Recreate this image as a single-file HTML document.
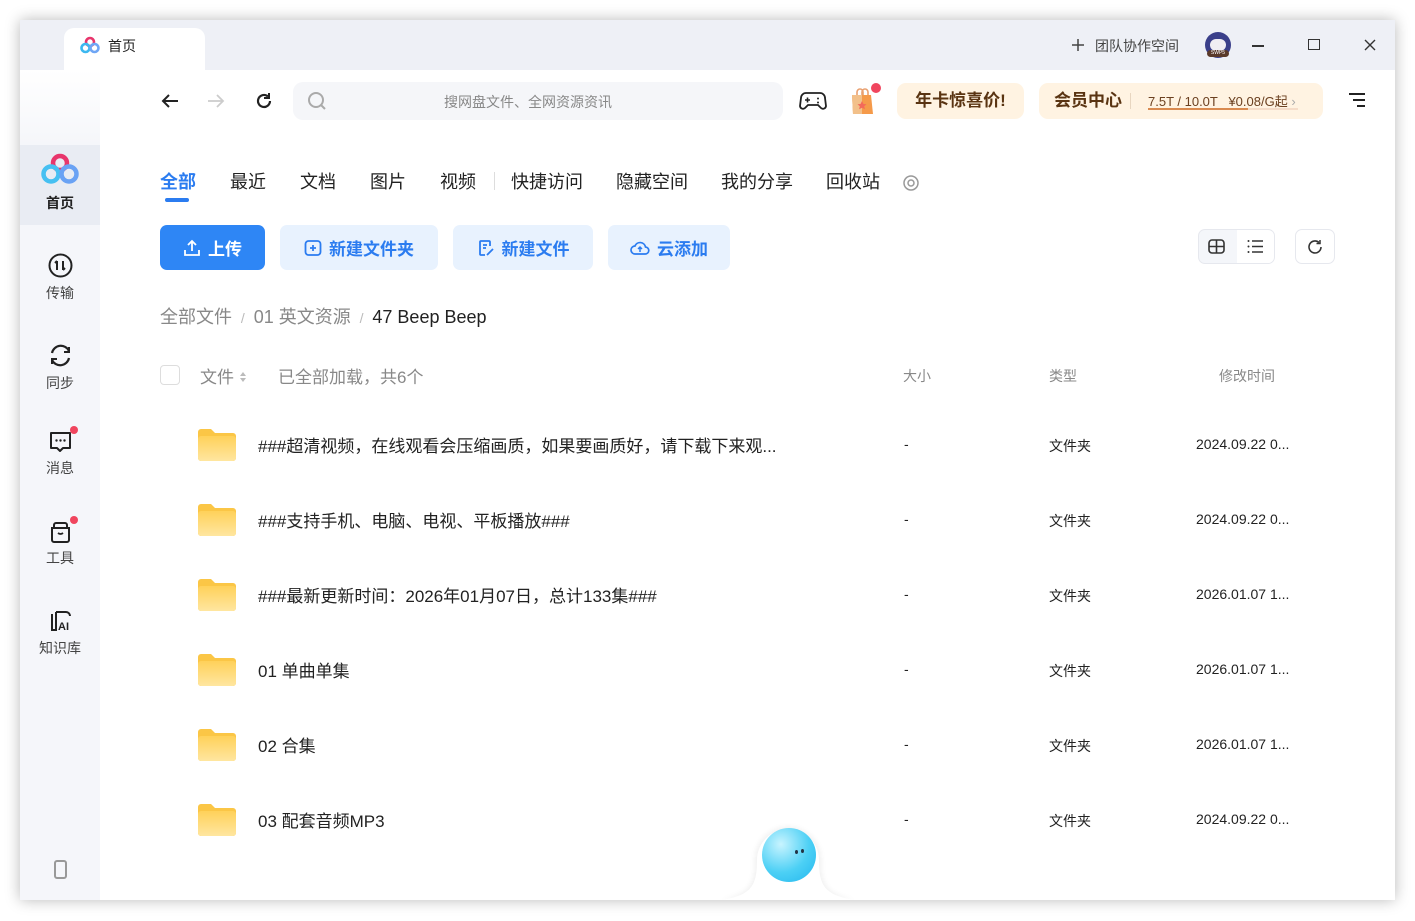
<!DOCTYPE html>
<html><head><meta charset="utf-8">
<style>
*{margin:0;padding:0;box-sizing:border-box}
body{width:1415px;height:921px;background:#fff;position:relative;overflow:hidden;font-family:"Liberation Sans","Noto Sans CJK SC",sans-serif;color:#222}
.a{position:absolute;white-space:nowrap}
#win{position:absolute;left:20px;top:20px;width:1375px;height:880px;background:#fff;box-shadow:0 0 14px rgba(0,0,0,.28);overflow:hidden}
#title{position:absolute;left:0;top:0;width:1375px;height:50px;background:#eef0f6}
#tab{position:absolute;left:44px;top:8px;width:141px;height:46px;background:#fff;border-radius:10px 10px 0 0}
#side{position:absolute;left:0;top:50px;width:80px;height:830px;background:#f5f6fa}
.si{position:absolute;left:0;width:80px;text-align:center;font-size:14px;color:#444}
.btn{position:absolute;top:205px;height:45px;border-radius:7px;background:#e8f2fe;color:#2b7cf0;font-weight:bold;font-size:17px;display:flex;align-items:center;justify-content:center;gap:7px}
.nav{position:absolute;top:148px;font-size:18px;color:#222}
.row{position:absolute;left:178px;width:1140px;height:40px}
.fold{position:absolute;left:0;top:3px;width:38px;height:32px}
.rn{position:absolute;left:60px;top:6px;font-size:17px;color:#222}
.rs{position:absolute;left:706px;top:10px;font-size:14px}
.rt{position:absolute;left:851px;top:10px;font-size:14px}
.rd{position:absolute;left:998px;top:10px;font-size:14px}
</style></head><body>
<div id="win">
<div id="title"></div>
<div id="tab"></div>
<svg class="a" style="left:60px;top:16px" width="20" height="18" viewBox="0 0 20 18"><circle cx="10" cy="6" r="4" fill="none" stroke="#e8356c" stroke-width="2.6"/><circle cx="5.5" cy="12" r="4" fill="none" stroke="#3cb8f0" stroke-width="2.6"/><circle cx="14.5" cy="12" r="4" fill="none" stroke="#6fa6f5" stroke-width="2.6"/></svg>
<div class="a" style="left:88px;top:16px;font-size:14px">首页</div>
<svg class="a" style="left:1051px;top:18px" width="14" height="14" viewBox="0 0 14 14"><path d="M7 1v12M1 7h12" stroke="#444" stroke-width="1.5"/></svg>
<div class="a" style="left:1075px;top:16px;font-size:14px;color:#444">团队协作空间</div>
<div class="a" style="left:1185px;top:12px;width:26px;height:26px;border-radius:50%;background:#3a3f8a"><div style="position:absolute;left:5px;top:7px;width:16px;height:12px;background:#f0eef3;border-radius:6px"></div><div style="position:absolute;left:2px;top:18px;width:22px;height:7px;background:#5a3a2a;border-radius:4px;font-size:5px;color:#fff;text-align:center;line-height:7px">SWP5</div></div>
<div class="a" style="left:1232px;top:25px;width:12px;height:1.5px;background:#333"></div>
<div class="a" style="left:1288px;top:19px;width:12px;height:11px;border:1.5px solid #333"></div>
<svg class="a" style="left:1344px;top:19px" width="12" height="12" viewBox="0 0 12 12"><path d="M1 1l10 10M11 1L1 11" stroke="#333" stroke-width="1.4"/></svg>

<div id="side">
 <div class="a" style="left:0;top:0;width:80px;height:75px;background:linear-gradient(#fff,#f5f6fa)"></div>
 <div class="a" style="left:0;top:75px;width:80px;height:80px;background:#e9ecf3"></div>
 <svg class="a" style="left:20px;top:82px" width="40" height="34" viewBox="0 0 40 34"><circle cx="20" cy="11" r="7" fill="none" stroke="#e8356c" stroke-width="4.5"/><circle cx="11" cy="22" r="7.5" fill="none" stroke="#46c0f2" stroke-width="4.5"/><circle cx="29" cy="22" r="7.5" fill="none" stroke="#6aa2f4" stroke-width="4.5"/></svg>
 <div class="si" style="top:123px;font-weight:bold;color:#222">首页</div>
 <svg class="a" style="left:28px;top:183px" width="25" height="25" viewBox="0 0 25 25"><circle cx="12.5" cy="12.5" r="11" fill="none" stroke="#222" stroke-width="2"/><path d="M9 8v9M9 8l-2 2M15 8v9M15 17l2-2" stroke="#222" stroke-width="2" fill="none"/></svg>
 <div class="si" style="top:213px">传输</div>
 <svg class="a" style="left:28px;top:273px" width="25" height="25" viewBox="0 0 25 25"><path d="M4 10a9 9 0 0 1 17-2M21 15a9 9 0 0 1-17 2" stroke="#222" stroke-width="2.2" fill="none"/><path d="M21 4v5h-5M4 21v-5h5" stroke="#222" stroke-width="2" fill="none"/></svg>
 <div class="si" style="top:303px">同步</div>
 <svg class="a" style="left:28px;top:360px" width="25" height="25" viewBox="0 0 25 25"><path d="M3 3h19v15h-7l-3 3-3-3H3z" stroke="#222" stroke-width="2" fill="none" stroke-linejoin="round"/><circle cx="8.5" cy="10.5" r="1.2" fill="#222"/><circle cx="12.5" cy="10.5" r="1.2" fill="#222"/><circle cx="16.5" cy="10.5" r="1.2" fill="#222"/></svg>
 <div class="a" style="left:50px;top:356px;width:8px;height:8px;border-radius:50%;background:#f0455e"></div>
 <div class="si" style="top:388px">消息</div>
 <svg class="a" style="left:28px;top:450px" width="25" height="25" viewBox="0 0 25 25"><path d="M6 7V5a2 2 0 0 1 2-2h9a2 2 0 0 1 2 2v2M4 8h17v12a2 2 0 0 1-2 2H6a2 2 0 0 1-2-2z" stroke="#222" stroke-width="2" fill="none"/><path d="M10 13q2.5 2 5 0" stroke="#222" stroke-width="1.8" fill="none"/></svg>
 <div class="a" style="left:50px;top:446px;width:8px;height:8px;border-radius:50%;background:#f0455e"></div>
 <div class="si" style="top:478px">工具</div>
 <svg class="a" style="left:29px;top:539px" width="25" height="25" viewBox="0 0 25 25"><path d="M3 5v16h4V3" stroke="#222" stroke-width="2" fill="none"/><path d="M7 3h10a4 4 0 0 1 4 4" stroke="#222" stroke-width="2" fill="none"/><text x="9" y="21" font-size="11" font-weight="bold" font-family="Liberation Sans" fill="#222">AI</text></svg>
 <div class="si" style="top:568px">知识库</div>
 <div class="a" style="left:34px;top:790px;width:13px;height:19px;border:2px solid #999;border-radius:3px"></div>
</div>

<svg class="a" style="left:140px;top:72px" width="20" height="18" viewBox="0 0 20 18"><path d="M18 9H3M9 3L3 9l6 6" stroke="#222" stroke-width="2" fill="none"/></svg>
<svg class="a" style="left:186px;top:72px" width="20" height="18" viewBox="0 0 20 18"><path d="M2 9h15M11 3l6 6-6 6" stroke="#ccc" stroke-width="1.8" fill="none"/></svg>
<svg class="a" style="left:234px;top:71px" width="20" height="20" viewBox="0 0 20 20"><path d="M16 10a6 6 0 1 1-2-4.5" stroke="#222" stroke-width="2.2" fill="none"/><path d="M15 2v5h-5" stroke="#222" stroke-width="2" fill="none"/></svg>
<div class="a" style="left:273px;top:62px;width:490px;height:38px;background:#f5f6f9;border-radius:10px"></div>
<svg class="a" style="left:287px;top:71px" width="20" height="20" viewBox="0 0 20 20"><circle cx="9" cy="9" r="7" stroke="#aaa" stroke-width="2" fill="none"/><path d="M14 14l4 4" stroke="#aaa" stroke-width="2"/></svg>
<div class="a" style="left:424px;top:72px;font-size:14px;color:#888">搜网盘文件、全网资源资讯</div>
<svg class="a" style="left:779px;top:70px" width="28" height="22" viewBox="0 0 28 22"><path d="M7 3h14a5 5 0 0 1 5 5l1 8a3 3 0 0 1-5 2l-3-3H9l-3 3a3 3 0 0 1-5-2l1-8a5 5 0 0 1 5-5z" stroke="#222" stroke-width="1.8" fill="none"/><path d="M6 10h5M8.5 7.5v5" stroke="#222" stroke-width="1.6"/><circle cx="19" cy="8.5" r="1" fill="#222"/><circle cx="19" cy="12.5" r="1" fill="#222"/></svg>
<svg class="a" style="left:829px;top:66px" width="26" height="30" viewBox="0 0 26 30"><path d="M8 9V6a3 3 0 0 1 6 0v3M13 9V6a3 3 0 0 1 6 0v3" stroke="#e9a070" stroke-width="1.6" fill="none"/><path d="M3 9h19l2 19H4z" fill="#f59a4a"/><path d="M3 9h10v19H4z" fill="#f2c08a"/><path d="M13 15l1.5 3 3 .3-2.3 2 .7 3-2.9-1.6-2.9 1.6.7-3-2.3-2 3-.3z" fill="#f36a5a"/></svg>
<div class="a" style="left:851px;top:63px;width:10px;height:10px;border-radius:50%;background:#f0455e"></div>
<div class="a" style="left:877px;top:63px;width:127px;height:36px;background:#fff3e2;border-radius:9px;font-size:17px;font-weight:bold;color:#5a3412;text-align:center;line-height:36px">年卡惊喜价!</div>
<div class="a" style="left:1019px;top:63px;width:284px;height:36px;background:#fff3e2;border-radius:9px"></div>
<div class="a" style="left:1034px;top:70px;font-size:17px;font-weight:bold;color:#5a3412;line-height:22px">会员中心</div>
<div class="a" style="left:1110px;top:73px;width:1px;height:16px;background:#e8d6c0"></div>
<div class="a" style="left:1128px;top:71px;font-size:13px;color:#6b4020">7.5T / 10.0T &nbsp; ¥0.08/G起 <span style="color:#aaa">›</span></div>
<div class="a" style="left:1128px;top:88px;width:150px;height:2px;background:#f5dcc8"></div>
<div class="a" style="left:1128px;top:88px;width:100px;height:2px;background:#d98a50"></div>
<svg class="a" style="left:1328px;top:72px" width="18" height="16" viewBox="0 0 18 16"><path d="M1 2h16M5 8h12M9 14h8" stroke="#222" stroke-width="2"/></svg>

<div class="nav" style="left:140px;color:#2b7cf0;font-weight:bold">全部</div>
<div class="a" style="left:145px;top:178px;width:24px;height:4px;border-radius:2px;background:#2b7cf0"></div>
<div class="nav" style="left:210px">最近</div>
<div class="nav" style="left:280px">文档</div>
<div class="nav" style="left:350px">图片</div>
<div class="nav" style="left:420px">视频</div>
<div class="a" style="left:474px;top:152px;width:1px;height:18px;background:#ddd"></div>
<div class="nav" style="left:491px">快捷访问</div>
<div class="nav" style="left:596px">隐藏空间</div>
<div class="nav" style="left:701px">我的分享</div>
<div class="nav" style="left:806px">回收站</div>
<svg class="a" style="left:882px;top:154px" width="18" height="18" viewBox="0 0 18 18"><circle cx="9" cy="9" r="7" stroke="#999" stroke-width="1.5" fill="none"/><circle cx="9" cy="9" r="3" stroke="#999" stroke-width="1.5" fill="none"/></svg>

<div class="btn" style="left:140px;width:105px;background:#2e86f5;color:#fff"><svg width="18" height="18" viewBox="0 0 18 18"><path d="M9 12V2M5 6l4-4 4 4M2 11v5h14v-5" stroke="#fff" stroke-width="1.8" fill="none"/></svg>上传</div>
<div class="btn" style="left:260px;width:158px"><svg width="18" height="18" viewBox="0 0 18 18"><rect x="1.5" y="2" width="15" height="14" rx="3" stroke="#2b7cf0" stroke-width="1.8" fill="none"/><path d="M9 6v6M6 9h6" stroke="#2b7cf0" stroke-width="1.8"/></svg>新建文件夹</div>
<div class="btn" style="left:433px;width:140px"><svg width="18" height="18" viewBox="0 0 18 18"><path d="M13 7V3a1 1 0 0 0-1-1H4a1 1 0 0 0-1 1v12a1 1 0 0 0 1 1h4M6 6h4M6 9h3M10 16l6-6" stroke="#2b7cf0" stroke-width="1.8" fill="none"/></svg>新建文件</div>
<div class="btn" style="left:588px;width:122px"><svg width="20" height="18" viewBox="0 0 20 18"><path d="M5 15a4 4 0 0 1 0-8 5.5 5.5 0 0 1 10.5 1A3.5 3.5 0 0 1 15 15z" stroke="#2b7cf0" stroke-width="1.7" fill="none"/><path d="M10 13V8M8 10l2-2 2 2" stroke="#2b7cf0" stroke-width="1.5" fill="none"/></svg>云添加</div>
<div class="a" style="left:1178px;top:209px;width:77px;height:35px;border:1px solid #e6e8ee;border-radius:7px;background:#f4f6fa"></div>
<div class="a" style="left:1217px;top:210px;width:37px;height:33px;background:#fff;border-radius:0 6px 6px 0"></div>
<svg class="a" style="left:1188px;top:219px" width="17" height="15" viewBox="0 0 17 15"><rect x="1" y="1" width="15" height="13" rx="3" stroke="#333" stroke-width="1.6" fill="none"/><path d="M1 7.5h15M8.5 1v13" stroke="#333" stroke-width="1.6"/></svg>
<svg class="a" style="left:1227px;top:219px" width="17" height="15" viewBox="0 0 17 15"><path d="M5 2h11M5 7.5h11M5 13h11" stroke="#333" stroke-width="1.5"/><circle cx="1.5" cy="2" r="1" fill="#333"/><circle cx="1.5" cy="7.5" r="1" fill="#333"/><circle cx="1.5" cy="13" r="1" fill="#333"/></svg>
<div class="a" style="left:1275px;top:209px;width:40px;height:35px;border:1px solid #e6e8ee;border-radius:7px"></div>
<svg class="a" style="left:1286px;top:218px" width="18" height="18" viewBox="0 0 18 18"><path d="M15 9a6 6 0 1 1-2-4.5" stroke="#333" stroke-width="1.6" fill="none"/><path d="M14 2v3.5h-3.5" stroke="#333" stroke-width="1.5" fill="none"/></svg>

<div class="a" style="left:140px;top:283px;font-size:18px;color:#888">全部文件 <span style="color:#bbb;font-size:14px">&nbsp;/&nbsp;</span> 01 英文资源 <span style="color:#bbb;font-size:14px">&nbsp;/&nbsp;</span> <span style="color:#222">47 Beep Beep</span></div>

<div class="a" style="left:140px;top:345px;width:20px;height:20px;border:1.5px solid #ddd;border-radius:4px"></div>
<div class="a" style="left:180px;top:343px;font-size:17px;color:#888">文件 <svg width="8" height="12" viewBox="0 0 8 12"><path d="M4 1l3 4H1zM4 11l3-4H1z" fill="#bbb"/></svg></div>
<div class="a" style="left:258px;top:343px;font-size:17px;color:#888">已全部加载，共6个</div>
<div class="a" style="left:883px;top:346px;font-size:14px;color:#888">大小</div>
<div class="a" style="left:1029px;top:346px;font-size:14px;color:#888">类型</div>
<div class="a" style="left:1199px;top:346px;font-size:14px;color:#888">修改时间</div>

<div class="row" style="top:406px"><svg class="fold" viewBox="0 0 38 32"><defs><linearGradient id="g" x1="0" y1="0" x2="0" y2="1"><stop offset="0" stop-color="#ffd15a"/><stop offset="1" stop-color="#ffe6a0"/></linearGradient></defs><path d="M0 3a3 3 0 0 1 3-3h10l4 4h18a3 3 0 0 1 3 3v22a3 3 0 0 1-3 3H3a3 3 0 0 1-3-3z" fill="#fbc646"/><rect x="0" y="7" width="38" height="25" rx="3" fill="url(#g)"/></svg><div class="rn">###超清视频，在线观看会压缩画质，如果要画质好，请下载下来观...</div><div class="rs">-</div><div class="rt">文件夹</div><div class="rd">2024.09.22 0...</div></div>
<div class="row" style="top:481px"><svg class="fold" viewBox="0 0 38 32"><path d="M0 3a3 3 0 0 1 3-3h10l4 4h18a3 3 0 0 1 3 3v22a3 3 0 0 1-3 3H3a3 3 0 0 1-3-3z" fill="#fbc646"/><rect x="0" y="7" width="38" height="25" rx="3" fill="url(#g)"/></svg><div class="rn">###支持手机、电脑、电视、平板播放###</div><div class="rs">-</div><div class="rt">文件夹</div><div class="rd">2024.09.22 0...</div></div>
<div class="row" style="top:556px"><svg class="fold" viewBox="0 0 38 32"><path d="M0 3a3 3 0 0 1 3-3h10l4 4h18a3 3 0 0 1 3 3v22a3 3 0 0 1-3 3H3a3 3 0 0 1-3-3z" fill="#fbc646"/><rect x="0" y="7" width="38" height="25" rx="3" fill="url(#g)"/></svg><div class="rn">###最新更新时间：2026年01月07日，总计133集###</div><div class="rs">-</div><div class="rt">文件夹</div><div class="rd">2026.01.07 1...</div></div>
<div class="row" style="top:631px"><svg class="fold" viewBox="0 0 38 32"><path d="M0 3a3 3 0 0 1 3-3h10l4 4h18a3 3 0 0 1 3 3v22a3 3 0 0 1-3 3H3a3 3 0 0 1-3-3z" fill="#fbc646"/><rect x="0" y="7" width="38" height="25" rx="3" fill="url(#g)"/></svg><div class="rn">01 单曲单集</div><div class="rs">-</div><div class="rt">文件夹</div><div class="rd">2026.01.07 1...</div></div>
<div class="row" style="top:706px"><svg class="fold" viewBox="0 0 38 32"><path d="M0 3a3 3 0 0 1 3-3h10l4 4h18a3 3 0 0 1 3 3v22a3 3 0 0 1-3 3H3a3 3 0 0 1-3-3z" fill="#fbc646"/><rect x="0" y="7" width="38" height="25" rx="3" fill="url(#g)"/></svg><div class="rn">02 合集</div><div class="rs">-</div><div class="rt">文件夹</div><div class="rd">2026.01.07 1...</div></div>
<div class="row" style="top:781px"><svg class="fold" viewBox="0 0 38 32"><path d="M0 3a3 3 0 0 1 3-3h10l4 4h18a3 3 0 0 1 3 3v22a3 3 0 0 1-3 3H3a3 3 0 0 1-3-3z" fill="#fbc646"/><rect x="0" y="7" width="38" height="25" rx="3" fill="url(#g)"/></svg><div class="rn">03 配套音频MP3</div><div class="rs">-</div><div class="rt">文件夹</div><div class="rd">2024.09.22 0...</div></div>

<svg class="a" style="left:690px;top:795px" width="156" height="85" viewBox="0 0 156 85"><defs><filter id="s"><feGaussianBlur stdDeviation="3"/></filter></defs><path d="M10 85C40 80 45 70 45 45a33 33 0 0 1 66 0c0 25 5 35 35 40z" fill="#000" opacity=".06" filter="url(#s)"/><path d="M12 85C42 80 47 70 47 45a31 31 0 0 1 62 0c0 25 5 35 35 40z" fill="#fff"/></svg>
<div class="a" style="left:742px;top:808px;width:54px;height:54px;border-radius:50%;background:radial-gradient(circle at 35% 30%,#c8f4ff,#4cd0f5 55%,#22b6ee)"></div>
<div class="a" style="left:775px;top:830px;width:3px;height:4px;border-radius:50%;background:#234"></div>
<div class="a" style="left:781px;top:829px;width:3px;height:4px;border-radius:50%;background:#234"></div>
</div>
</body></html>
